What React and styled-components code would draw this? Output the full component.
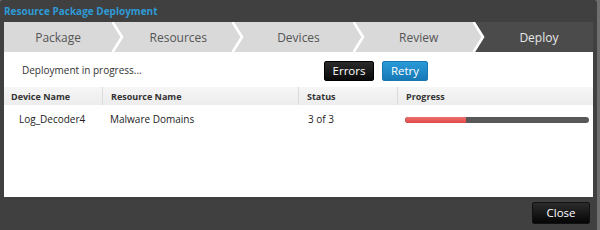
import React from "react";
import styled, { createGlobalStyle } from "styled-components";

const GlobalStyle = createGlobalStyle`
  html, body { margin: 0; padding: 0; background: #6f6f6f; }
  body { font-family: "Open Sans", "Noto Sans", sans-serif; }
  * { box-sizing: border-box; }
`;

const Dialog = styled.div`
  width: 597px;
  height: 232px;
  background: #404040;
  display: flex;
  flex-direction: column;
  padding: 0 4px 0 4px;
  border-radius: 3px 3px 0 0;
`;

const TitleBar = styled.div`
  height: 22px;
  display: flex;
  align-items: center;
  font-size: 10px;
  font-weight: 700;
  color: #2e9ad6;
`;

const Steps = styled.div`
  height: 30px;
  display: flex;
`;

const Step = styled.div`
  flex: 1 1 0;
  display: flex;
  align-items: center;
  justify-content: center;
  background: ${(p) => (p.$active ? "#4b4b4b" : "#d9d9d9")};
  color: ${(p) => (p.$active ? "#e8e8e8" : "#555555")};
  font-size: 12px;
`;

const SepSvg = styled.svg`
  display: block;
  flex: 0 0 12px;
  width: 12px;
  height: 30px;
`;

const Separator = ({ left, right }) => (
  <SepSvg viewBox="0 0 12 30" preserveAspectRatio="none">
    <rect x="0" y="0" width="12" height="30" fill={right} />
    <polygon points="0,0 1,0 11,15 1,30 0,30" fill={left} />
    <polyline points="0,-1 10,15 0,31" fill="none" stroke="#ffffff" strokeWidth="2.6" />
  </SepSvg>
);

const Content = styled.div`
  flex: 0 0 145px;
  background: #ffffff;
  display: flex;
  flex-direction: column;
`;

const StatusBar = styled.div`
  height: 35px;
  display: grid;
  grid-template-columns: 302px auto;
  align-items: center;
  padding-left: 18px;
  font-size: 10px;
  color: #333;
`;

const ButtonGroup = styled.div`
  display: flex;
  gap: 8px;
  padding-top: 2px;
`;

const Button = styled.button`
  height: 20px;
  width: ${(p) => p.$w || 50}px;
  padding: 0;
  border-radius: 2px;
  font-family: "Open Sans", "Noto Sans", sans-serif;
  font-size: 11.5px;
  color: #ffffff;
  cursor: pointer;
  border: 1px solid ${(p) => (p.$variant === "blue" ? "#1a78b0" : "#000")};
  background: ${(p) =>
    p.$variant === "blue"
      ? "linear-gradient(#2a9ad8, #1679b6)"
      : "linear-gradient(#2a2a2a, #0a0a0a)"};
  line-height: 18px;
`;

const Grid = styled.div`
  display: grid;
  grid-template-columns: 98px 196px 99px 1fr;
`;

const HeaderRow = styled(Grid)`
  height: 18px;
  background: linear-gradient(#f6f6f6, #ececec);
`;

const HeaderCell = styled.div`
  display: flex;
  align-items: center;
  padding-left: ${(p) => p.$pad || 8}px;
  font-size: 9px;
  font-weight: 700;
  color: #333;
  border-left: ${(p) => (p.$first ? "none" : "1px solid #dcdcdc")};
`;

const BodyRow = styled(Grid)`
  height: 28px;
`;

const Cell = styled.div`
  display: flex;
  align-items: center;
  padding-left: ${(p) => p.$pad || 8}px;
  font-size: 10px;
  color: #222;
`;

const Track = styled.div`
  width: 184px;
  height: 6px;
  border-radius: 3px;
  background: #585858;
  overflow: hidden;
  margin-top: 2px;
`;

const Fill = styled.div`
  height: 100%;
  background: linear-gradient(#f07070, #e04848);
  border-radius: 3px 0 0 3px;
`;

const Footer = styled.div`
  height: 32px;
  display: flex;
  align-items: center;
  justify-content: flex-end;
  padding-right: 3px;
`;

const CloseButton = styled(Button)`
  height: 22px;
  border: 1px solid #111;
  background: linear-gradient(#2c2c2c, #050505);
`;

const steps = ["Package", "Resources", "Devices", "Review", "Deploy"];

export default function App() {
  const progress = 33;
  return (
    <>
      <GlobalStyle />
      <Dialog>
        <TitleBar>Resource Package Deployment</TitleBar>
        <Steps>
          {steps.map((s, i) => {
            const active = i === steps.length - 1;
            const color = active ? "#4b4b4b" : "#d9d9d9";
            return (
              <React.Fragment key={s}>
                {i > 0 && <Separator left="#d9d9d9" right={color} />}
                <Step $active={active}>{s}</Step>
              </React.Fragment>
            );
          })}
        </Steps>
        <Content>
          <StatusBar>
            <span>Deployment in progress...</span>
            <ButtonGroup>
              <Button $w={50}>Errors</Button>
              <Button $variant="blue" $w={46}>Retry</Button>
            </ButtonGroup>
          </StatusBar>
          <HeaderRow>
            <HeaderCell $first $pad={7}>Device Name</HeaderCell>
            <HeaderCell>Resource Name</HeaderCell>
            <HeaderCell>Status</HeaderCell>
            <HeaderCell>Progress</HeaderCell>
          </HeaderRow>
          <BodyRow>
            <Cell $pad={15}>Log_Decoder4</Cell>
            <Cell>Malware Domains</Cell>
            <Cell $pad={10}>3 of 3</Cell>
            <Cell>
              <Track>
                <Fill style={{ width: `${progress}%` }} />
              </Track>
            </Cell>
          </BodyRow>
        </Content>
        <Footer>
          <CloseButton $w={58}>Close</CloseButton>
        </Footer>
      </Dialog>
    </>
  );
}
